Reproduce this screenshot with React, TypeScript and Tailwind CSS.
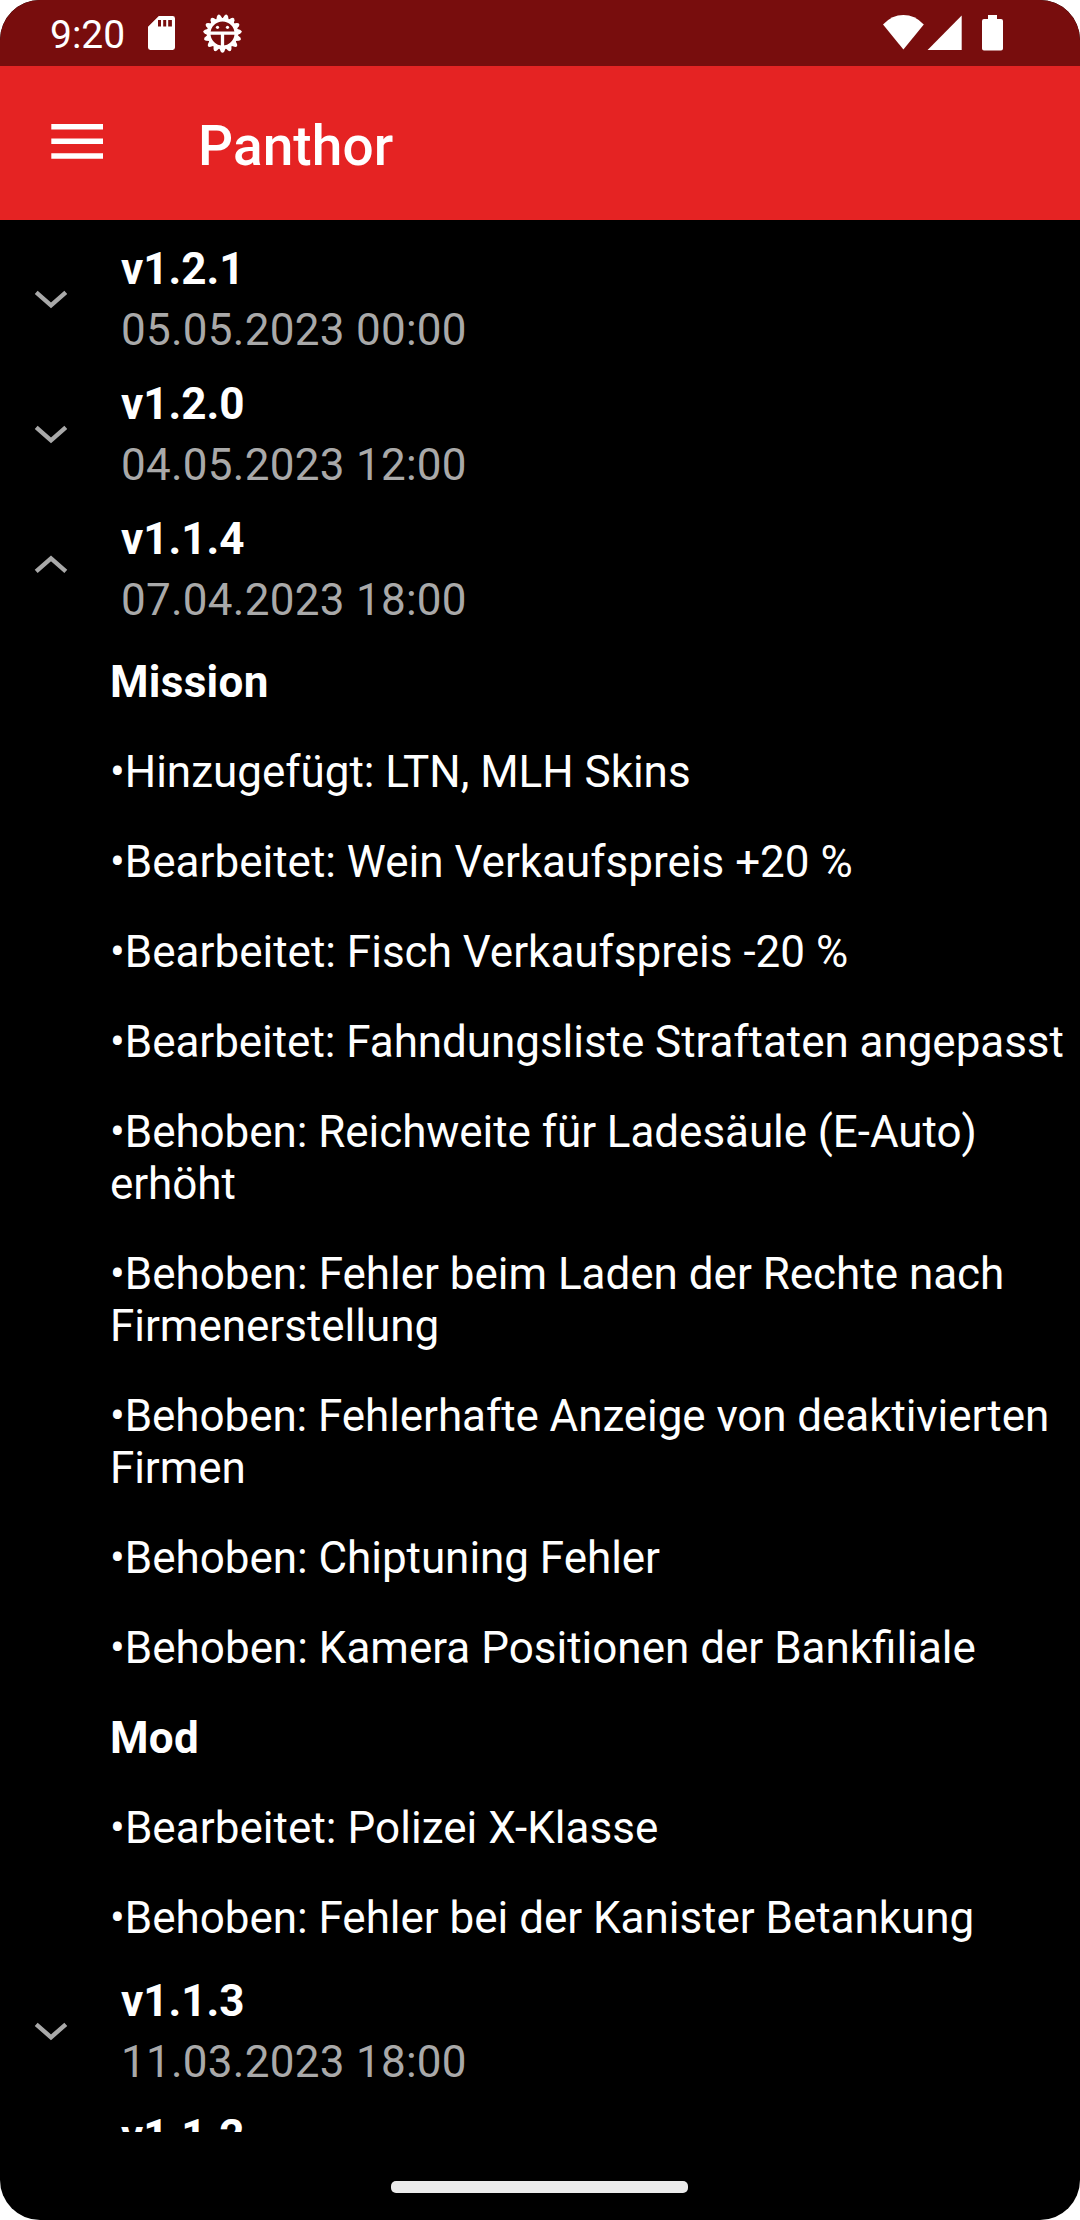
import React from "react";

type Release = { version: string; date: string; open?: boolean };
type Paragraph = { text: string; tracking?: string };

function ReleaseHeader({ version, date, open }: Release) {
  return (
    <div className="flex h-[135px] w-full">
      <div className={open ? "w-[121px] shrink-0 pl-[33px] pt-[64px]" : "w-[121px] shrink-0 pl-[33px] pt-[68px]"}>
        <svg width="36" height="22" viewBox="0 0 36 22" fill="none" stroke="#a9a9a9" strokeWidth="4.4">
          {open ? <path d="M3.2 17.4 18 4.4 32.8 17.4" /> : <path d="M3.2 4.3 18 17.3 32.8 4.3" />}
        </svg>
      </div>
      <div className="whitespace-nowrap pt-[23px] text-[44px] leading-[52px]">
        <div className="font-bold text-white">{version}</div>
        <div className="mt-[9px] tracking-[0.27px] text-[#a9a9a9]">{date}</div>
      </div>
    </div>
  );
}

const mission: Paragraph[] = [
  { text: "•Hinzugefügt: LTN, MLH Skins", tracking: "tracking-[-0.02px]" },
  { text: "•Bearbeitet: Wein Verkaufspreis +20 %" },
  { text: "•Bearbeitet: Fisch Verkaufspreis -20 %" },
  { text: "•Bearbeitet: Fahndungsliste Straftaten angepasst", tracking: "tracking-[-0.05px]" },
  { text: "•Behoben: Reichweite für Ladesäule (E-Auto) erhöht", tracking: "tracking-[-0.06px]" },
  { text: "•Behoben: Fehler beim Laden der Rechte nach Firmenerstellung", tracking: "tracking-[-0.02px]" },
  { text: "•Behoben: Fehlerhafte Anzeige von deaktivierten Firmen", tracking: "tracking-[-0.08px]" },
  { text: "•Behoben: Chiptuning Fehler", tracking: "tracking-[-0.04px]" },
  { text: "•Behoben: Kamera Positionen der Bankfiliale" },
];

const mod: Paragraph[] = [
  { text: "•Bearbeitet: Polizei X-Klasse", tracking: "tracking-[0.05px]" },
  { text: "•Behoben: Fehler bei der Kanister Betankung", tracking: "tracking-[-0.03px]" },
];

function Section({ title, items }: { title: string; items: Paragraph[] }) {
  return (
    <>
      <h2 className="py-[19px] font-bold tracking-[0.3px]">{title}</h2>
      {items.map((p) => (
        <p key={p.text} className={"py-[19px] " + (p.tracking ?? "")}>
          {p.text}
        </p>
      ))}
    </>
  );
}

const teeth = Array.from({ length: 15 }, (_, i) => i * 24);

function GearFace() {
  return (
    <svg className="ml-[27px] mt-[13px]" width="41" height="41" viewBox="-20.5 -20.5 41 41">
      <g fill="#fff">
        {teeth.map((a) => (
          <path key={a} transform={`rotate(${a})`} d="M-3.3 14.5 L-1.9 17.8 Q0 20.8 1.9 17.8 L3.3 14.5Z" />
        ))}
      </g>
      <circle r="13.8" fill="none" stroke="#fff" strokeWidth="3.6" />
      <path d="M-13 -0.4H13M0 0V13" stroke="#fff" strokeWidth="3.3" />
      <circle cx="-5" cy="-6.2" r="1.6" fill="#fff" />
      <circle cx="5" cy="-6.2" r="1.6" fill="#fff" />
    </svg>
  );
}

function StatusBar() {
  return (
    <div className="flex h-[66px] shrink-0 items-start bg-[#780d0d]">
      <span className="ml-[50px] mt-[12px] w-[76px] text-[39px] leading-[46px]">9:20</span>
      <svg className="ml-[22px] mt-[16px]" width="27" height="34" viewBox="0 0 27 34">
        <path
          fill="#fff"
          fillRule="evenodd"
          d="M10.8 0H24.6Q27 0 27 2.4V31.6Q27 34 24.6 34H2.4Q0 34 0 31.6V10.8ZM10 4V10.6H13V4ZM15.2 4V10.6H18.2V4ZM20.2 4V10.6H23.9V4Z"
        />
      </svg>
      <GearFace />
      <svg className="ml-auto mr-[77px] mt-[14px]" width="120" height="38" viewBox="0 0 120 38" fill="#fff">
        <path d="M0 10.4Q9 1 20.4 1T40.8 10.4L20.4 35.5Z" />
        <path d="M78.7 1.5V36H44.6Z" />
        <path d="M105 1h9v4h4Q120 5 120 7V34.6Q120 36.6 118 36.6H101Q99 36.6 99 34.6V7Q99 5 101 5h4Z" />
      </svg>
    </div>
  );
}

export default function App() {
  return (
    <div className="h-[2220px] w-[1080px] overflow-hidden bg-white font-[Roboto,sans-serif]">
      <div className="flex h-full w-full flex-col overflow-hidden rounded-[40px] bg-black text-white">
        <StatusBar />
        <div className="flex h-[154px] shrink-0 items-start bg-[#e52323]">
          <svg className="ml-[51px] mt-[58px]" width="52" height="36" viewBox="0 0 52 36" fill="#fff">
            <path d="M.3 0H52V5.5H.3ZM.3 14.6H52V20.1H.3ZM.3 29.2H52V34.7H.3Z" />
          </svg>
          <h1 className="ml-[95px] mt-[48px] text-[55px] font-medium leading-[64px] tracking-[0.1px]">Panthor</h1>
        </div>
        <div className="h-[1912px] shrink-0 overflow-hidden">
          <ReleaseHeader version="v1.2.1" date="05.05.2023 00:00" />
          <ReleaseHeader version="v1.2.0" date="04.05.2023 12:00" />
          <ReleaseHeader version="v1.1.4" date="07.04.2023 18:00" open />
          <div className="mb-[-11px] pl-[110px] pt-[12px] text-[44px] leading-[52px]">
            <Section title="Mission" items={mission} />
            <Section title="Mod" items={mod} />
          </div>
          <ReleaseHeader version="v1.1.3" date="11.03.2023 18:00" />
          <ReleaseHeader version="v1.1.2" date="" />
        </div>
        <div className="ml-[391px] mt-[49px] h-[12px] w-[297px] rounded-[5px] bg-[#ebebeb]" />
      </div>
    </div>
  );
}
